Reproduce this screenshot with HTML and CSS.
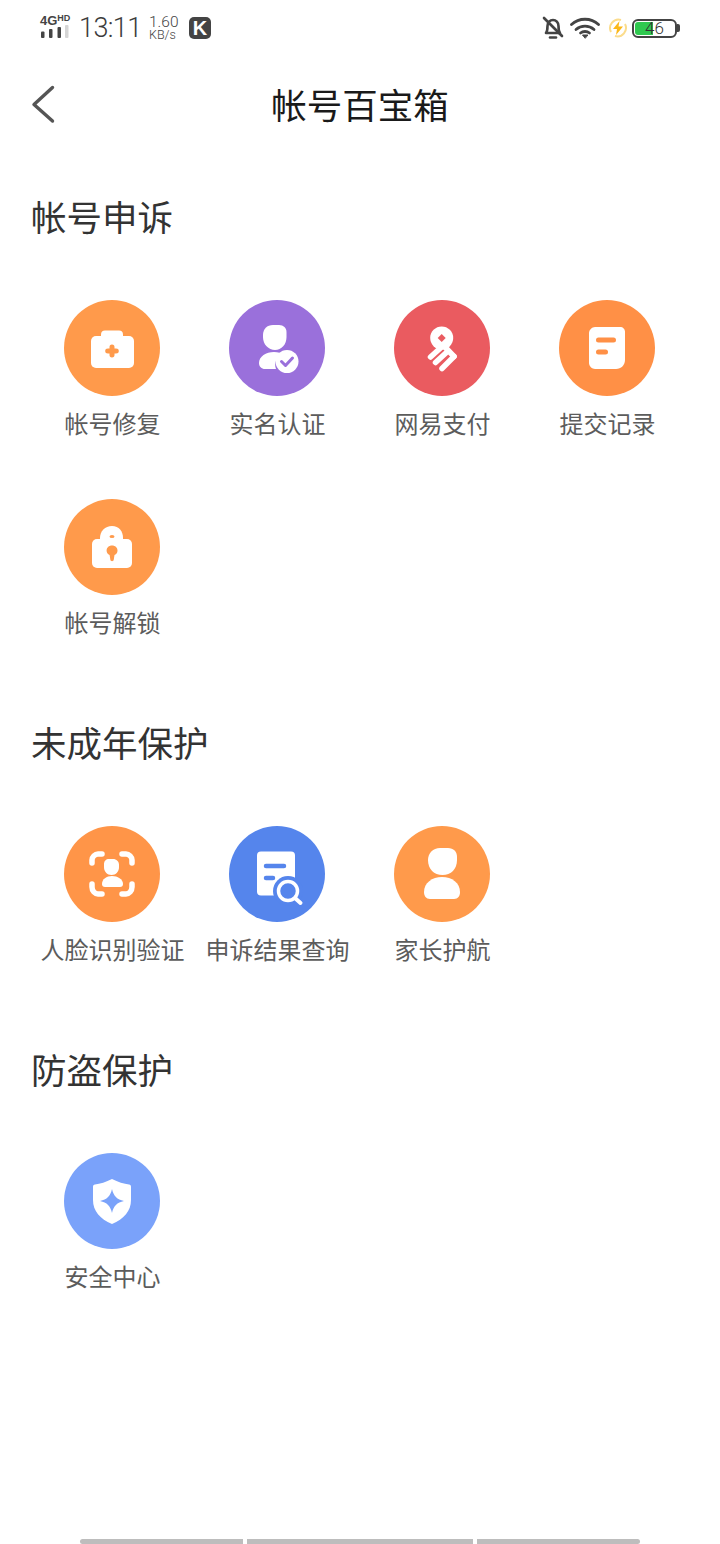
FILE: index.html
```html
<!DOCTYPE html>
<html lang="zh-CN">
<head>
<meta charset="utf-8">
<title>帐号百宝箱</title>
<link rel="stylesheet" href="styles.css">
</head>
<body>
<div class="page">
  <div class="status">
    <div class="status-left">
      <div class="net">
        <div class="net-text"><span class="net-4g">4G</span><span class="net-hd">HD</span></div>
        <svg class="signal" width="30" height="13" viewBox="0 0 30 13"><rect x="1" y="6.500" width="3.500" height="6.500" rx="1" fill="#444"/><rect x="9" y="4" width="3.500" height="9" rx="1" fill="#444"/><rect x="17.500" y="2" width="3.500" height="11" rx="1" fill="#444"/><rect x="25" y="0" width="3.500" height="13" rx="1" fill="#d5d5d5"/></svg>
      </div>
      <div class="time">13:11</div>
      <div class="speed"><span class="speed-num">1.60</span><span class="speed-unit">KB/s</span></div>
      <div class="k-badge">K</div>
    </div>
    <div class="status-right">
      <svg class="s-bell" width="22" height="24" viewBox="0 0 22 24" fill="none" stroke="#444" stroke-width="2.600" stroke-linecap="round" stroke-linejoin="round"><path d="M4 17c1.500-2 1.500-4 1.500-7 0-3.500 2.500-6 5.500-6s5.500 2.500 5.500 6c0 3 0 5 1.500 7z"/><path d="M8 21.500h6"/><path d="M2 2l18 18"/></svg>
      <svg class="s-wifi" width="30" height="22" viewBox="0 0 30 22" fill="none" stroke="#444" stroke-width="2.800" stroke-linecap="round"><path d="M1.500 7.500c7.500-7 19.500-7 27 0"/><path d="M6 12.500c5-4.500 13-4.500 18 0"/><path d="M10.500 16c2.500-2 6.500-2 9 0"/><path d="M15 21l-2.500-3h5z" fill="#444" stroke-width="1"/></svg>
      <svg class="s-bolt" width="20" height="20" viewBox="0 0 20 20"><path d="M3 14a8.500 8.500 0 0 1 10-12M17 6a8.500 8.500 0 0 1-10 12" fill="none" stroke="#fbdc8c" stroke-width="2"/><path d="M11.500 3L5 11h4l-1 6 7-8.500h-4.500z" fill="#fbb819"/></svg>
      <div class="battery">
        <div class="battery-body"><div class="battery-fill"></div><span class="battery-num">46</span></div>
        <div class="battery-tip"></div>
      </div>
    </div>
  </div>

  <header class="nav">
    <svg class="back" width="26" height="42" viewBox="0 0 26 42" fill="none" stroke="#555" stroke-width="3.400" stroke-linecap="round" stroke-linejoin="round"><path d="M22.500 3.500L4 20.500 22.500 37"/></svg>
    <h1 class="nav-title">帐号百宝箱</h1>
  </header>

  <main class="content">
    <section class="section">
      <h2 class="section-title">帐号申诉</h2>
      <div class="grid">
        <div class="tile">
          <svg class="icon" viewBox="0 0 96 96"><circle cx="48" cy="48" r="48" fill="#ff9a4b"/><path d="M37 37v-2.500c0-2.500 1.500-4 4-4h14c2.500 0 4 1.500 4 4V37z" fill="#fff"/><rect x="27" y="36" width="43" height="32" rx="5" fill="#fff"/><path d="M48 44.500c1.800 0 2.500 1 2.500 2.800v1.200h1.500c1.800 0 2.800.8 2.800 2.500s-1 2.500-2.800 2.500h-1.500v1.200c0 1.800-.7 2.800-2.500 2.800s-2.500-1-2.500-2.800v-1.200H44c-1.800 0-2.800-.8-2.800-2.500s1-2.500 2.800-2.500h1.500v-1.200c0-1.800.7-2.800 2.500-2.800z" fill="#ff9a4b"/></svg>
          <div class="label">帐号修复</div>
        </div>
        <div class="tile">
          <svg class="icon" viewBox="0 0 96 96"><circle cx="48" cy="48" r="48" fill="#9a70db"/><path d="M44 25h6c4.500 0 7.500 3 7.500 7v5c0 7.500-5 13-11.500 13S34 44.500 34 37v-2c0-6 4-10 10-10z" fill="#fff"/><path d="M30 63c0-6.500 7-11 15-11 4 0 7.500 1 10 2-7 2-10.500 8-8 15H36c-3.500 0-6-2.500-6-6z" fill="#fff"/><circle cx="58" cy="61.500" r="11.500" fill="#fff"/><path d="M52.500 61.500l4 4 7-7.500" fill="none" stroke="#9a70db" stroke-width="3" stroke-linecap="round" stroke-linejoin="round"/></svg>
          <div class="label">实名认证</div>
        </div>
        <div class="tile">
          <svg class="icon" viewBox="0 0 96 96"><circle cx="48" cy="48" r="48" fill="#ea5b60"/><circle cx="47.700" cy="38" r="11.500" fill="#fff"/><path d="M47.700 34l4 4-4 4-4-4z" fill="#ea5b60"/><g fill="none" stroke="#fff" stroke-width="5.500" stroke-linecap="round"><path d="M36.500 57l10-9"/><path d="M41.500 62.500l12-11"/><path d="M48 68.500l12-12"/><path d="M50 46l10 10.500"/></g></svg>
          <div class="label">网易支付</div>
        </div>
        <div class="tile">
          <svg class="icon" viewBox="0 0 96 96"><circle cx="48" cy="48" r="48" fill="#ff9046"/><path d="M36 27h25c3 0 5 2 5 5v28c0 5-4 9-9 9H36c-3 0-6-3-6-6V33c0-3 3-6 6-6z" fill="#fff"/><path d="M39.500 40h15M39.500 52h7" fill="none" stroke="#ff9046" stroke-width="5" stroke-linecap="round"/></svg>
          <div class="label">提交记录</div>
        </div>
        <div class="tile">
          <svg class="icon" viewBox="0 0 96 96"><circle cx="48" cy="48" r="48" fill="#ff9a4b"/><path d="M36 42v-3c0-7 5-12 12-12s11 5 11 12v3z" fill="#fff"/><rect x="28" y="40" width="40" height="29" rx="5" fill="#fff"/><ellipse cx="48" cy="37.500" rx="2.500" ry="1.500" fill="#ff9a4b"/><path d="M48 46.500c3.300 0 5.500 2.200 5.500 5 0 2-1 3.500-3 4.500l-.8 5c-.3 1.500-3 1.500-3.300 0l-.8-5c-2-1-3-2.500-3-4.500 0-2.800 2.200-5 5.400-5z" fill="#ff9a4b"/></svg>
          <div class="label">帐号解锁</div>
        </div>
      </div>
    </section>

    <section class="section">
      <h2 class="section-title">未成年保护</h2>
      <div class="grid">
        <div class="tile">
          <svg class="icon" viewBox="0 0 96 96"><circle cx="48" cy="48" r="48" fill="#ff9548"/><g fill="none" stroke="#fff" stroke-width="5.500" stroke-linecap="round"><path d="M28 37v-3c0-3 3-6 6-6h4"/><path d="M58 28h4c3 0 6 3 6 6v3"/><path d="M28 58v3c0 4 3 7 6 7h4"/><path d="M58 68h4c3 0 6-3 6-7v-3"/></g><path d="M45 33h4c3.500 0 6 2.500 6 6v2c0 4.500-3 8-7.500 8S40 45.500 40 41v-3c0-3 2-5 5-5z" fill="#fff"/><path d="M38 58c0-5 4.500-8 10-8s11 3 11 8c0 2-1 3-3 3H41c-2 0-3-1-3-3z" fill="#fff"/></svg>
          <div class="label">人脸识别验证</div>
        </div>
        <div class="tile">
          <svg class="icon" viewBox="0 0 96 96"><circle cx="48" cy="48" r="48" fill="#5585ec"/><rect x="28" y="25.500" width="38" height="44" rx="4" fill="#fff"/><path d="M37 40h18M37 52h7" fill="none" stroke="#5585ec" stroke-width="4.500" stroke-linecap="round"/><circle cx="59" cy="65" r="15" fill="#5585ec"/><circle cx="59" cy="65" r="9.500" fill="none" stroke="#fff" stroke-width="3.500"/><path d="M66.500 72.500l5 4.500" stroke="#fff" stroke-width="4" stroke-linecap="round"/></svg>
          <div class="label">申诉结果查询</div>
        </div>
        <div class="tile">
          <svg class="icon" viewBox="0 0 96 96"><circle cx="48" cy="48" r="48" fill="#ff9a4b"/><path d="M46 22h8c5.500 0 9 3.500 9 9v3c0 9-6 15-14.500 15S34 43 34 34c0-7 5-12 12-12z" fill="#fff"/><path d="M30 66c0-9 8-15 18-15s18 6 18 15c0 4-2 7-6 7H36c-4 0-6-3-6-7z" fill="#fff"/></svg>
          <div class="label">家长护航</div>
        </div>
      </div>
    </section>

    <section class="section">
      <h2 class="section-title">防盗保护</h2>
      <div class="grid">
        <div class="tile">
          <svg class="icon" viewBox="0 0 96 96"><circle cx="48" cy="48" r="48" fill="#7aa2fa"/><path d="M48 26c6 3 12 5 17 5.500 1.500.2 2 1 2 2.500v13c0 11-7 19-19 24-12-5-19-13-19-24V34c0-1.500.5-2.300 2-2.500C36 31 42 29 48 26z" fill="#fff"/><path d="M48 36c1.500 7 5 10.500 12 12-7 1.500-10.500 5-12 12-1.500-7-5-10.500-12-12 7-1.500 10.500-5 12-12z" fill="#7aa2fa"/></svg>
          <div class="label">安全中心</div>
        </div>
      </div>
    </section>
  </main>

  <div class="home-bar">
    <span class="seg seg-a"></span><span class="seg seg-b"></span><span class="seg seg-c"></span>
  </div>
</div>
</body>
</html>
```

FILE: styles.css
```css
* { box-sizing: border-box; margin: 0; padding: 0; }
html, body { background: #fff; }
body { font-family: "Noto Sans CJK SC", "Noto Sans", sans-serif; }
.page { width: 720px; height: 1544px; display: flex; flex-direction: column; overflow: hidden; }

.status { height: 56px; flex: none; display: flex; justify-content: space-between; align-items: center; padding: 0 40px; color: #444; }
.status-left { display: flex; align-items: center; }
.net { width: 31px; display: flex; flex-direction: column; margin-right: 8px; margin-bottom: 3px; }
.net-text { display: flex; align-items: flex-start; height: 10px; font-family: "Liberation Sans", sans-serif; font-weight: 700; line-height: 10px; }
.net-4g { font-size: 13px; line-height: 11px; }
.net-hd { font-size: 9px; line-height: 7px; }
.signal { display: block; width: 30px; height: 13px; }
.time { font-family: Roboto, sans-serif; font-weight: 300; font-size: 27px; line-height: 32px; width: 70px; letter-spacing: -0.6px; color: #3c3c3c; }
.speed { width: 40px; display: flex; flex-direction: column; font-family: Roboto, sans-serif; font-weight: 300; }
.speed-num { font-size: 15.500px; line-height: 13px; }
.speed-unit { font-size: 12.500px; line-height: 12px; }
.k-badge { width: 22px; height: 22px; border-radius: 5px; background: #444; color: #fff; font: 700 20px/22px "Liberation Sans", sans-serif; text-align: center; }
.status-right { display: flex; align-items: center; }
.s-bell { margin-right: 6px; }
.s-wifi { margin-right: 8px; }
.s-bolt { margin-right: 4px; }
.battery { display: flex; align-items: center; }
.battery-body { position: relative; width: 45px; height: 19px; border: 2px solid #444; border-radius: 6px; overflow: hidden; font: 300 17px/15px Roboto, sans-serif; text-align: center; color: #333; }
.battery-fill { position: absolute; left: 1px; top: 1px; bottom: 1px; width: 18px; background: #2fc84f; border-radius: 3px 0 0 3px; }
.battery-num { position: relative; }
.battery-tip { width: 3px; height: 8px; background: #444; border-radius: 0 2px 2px 0; }

.nav { position: relative; height: 98px; flex: none; display: flex; align-items: center; justify-content: center; padding-bottom: 3px; }
.back { position: absolute; left: 30px; top: 28px; }
.nav-title { font-size: 35.500px; line-height: 50px; font-weight: 400; color: #1a1a1a; }

.content { flex: 1; padding: 38px 31px 0 29px; display: flex; flex-direction: column; gap: 79px; }
.section-title { font-size: 35.500px; line-height: 48px; font-weight: 400; color: #333; margin-bottom: 60px; margin-left: 2px; }
.grid { display: grid; grid-template-columns: repeat(4, 165px); row-gap: 59px; }
.tile { display: flex; flex-direction: column; align-items: center; }
.icon { width: 96px; height: 96px; display: block; }
.label { margin-top: 10px; padding-left: 2px; font-size: 24px; line-height: 34px; color: #5c5c5c; white-space: nowrap; }

.home-bar { flex: none; height: 5px; display: flex; justify-content: center; gap: 4px; }
.seg { height: 5px; background: #bdbdbd; }
.seg-a { width: 163px; border-radius: 3px 0 0 3px; }
.seg-b { width: 226px; }
.seg-c { width: 163px; border-radius: 0 3px 3px 0; }
```
